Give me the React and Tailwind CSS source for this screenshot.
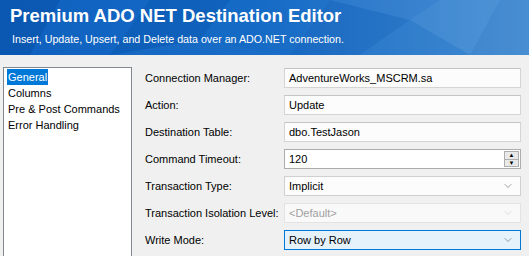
import { ChevronDown } from 'lucide-react'

const FONT = { fontFamily: '"Liberation Sans", Arial, sans-serif' }

function Header() {
  return (
    <div className="relative h-[55px] overflow-hidden bg-gradient-to-r from-[#0b5cb8] via-[#1469c4] to-[#4c92d3]">
      <svg className="absolute inset-0 h-full w-full" viewBox="0 0 529 55" preserveAspectRatio="none">
        <polygon points="0,0 60,0 30,55 0,55" fill="#0a4fa3" opacity="0.35" />
        <polygon points="60,0 150,0 110,55 30,55" fill="#1a6ccc" opacity="0.3" />
        <polygon points="150,0 230,0 200,40 110,55" fill="#0b55ad" opacity="0.3" />
        <polygon points="200,40 290,55 110,55" fill="#2a7bd1" opacity="0.25" />
        <polygon points="230,0 330,0 290,55 200,40" fill="#1c6fc9" opacity="0.3" />
        <polygon points="330,0 410,20 360,55 290,55" fill="#0f5fb9" opacity="0.3" />
        <polygon points="330,0 440,0 410,20" fill="#3a86d5" opacity="0.3" />
        <polygon points="410,20 470,55 360,55" fill="#2c7ccc" opacity="0.35" />
        <polygon points="440,0 500,0 470,55 410,20" fill="#5a9ee0" opacity="0.25" />
        <polygon points="500,0 529,0 529,55 470,55" fill="#3f86cc" opacity="0.3" />
      </svg>
      <div className="relative pl-[10px] pt-[4px] text-white">
        <div className="whitespace-nowrap text-[18.5px] font-bold leading-[24px]">Premium ADO NET Destination Editor</div>
        <div className="mt-[4px] whitespace-nowrap pl-[2px] text-[10.7px] leading-[14px]">
          Insert, Update, Upsert, and Delete data over an ADO.NET connection.
        </div>
      </div>
    </div>
  )
}

function TextBox({ value }) {
  return (
    <div className="flex h-[20px] w-[237px] items-center border border-[#d4d4d4] border-t-[#c4c4c4] bg-[#fcfcfc] pl-[4px] text-[11px] text-black">
      {value}
    </div>
  )
}

function Spinner({ value }) {
  return (
    <div className="flex h-[20px] w-[237px] items-center border border-[#adadad] bg-white pl-[4px] text-[11px] text-black">
      <span className="flex-1">{value}</span>
      <div className="mr-[1px] flex h-[16px] w-[15px] flex-col border border-[#adadad] bg-[#e9e9e9]">
        <div className="flex flex-1 items-center justify-center border-b border-[#adadad] text-[6px] leading-none">▲</div>
        <div className="flex flex-1 items-center justify-center text-[6px] leading-none">▼</div>
      </div>
    </div>
  )
}

function Combo({ value, disabled, focused }) {
  const box = focused
    ? 'border-[#0078d7] bg-[#e5f1fb] text-black'
    : disabled
    ? 'border-[#e3e3e3] bg-[#f9f9f9] text-[#a0a0a0]'
    : 'border-[#d0d0d0] bg-[#fcfcfc] text-black'
  return (
    <div className={`flex h-[20px] w-[237px] items-center border pl-[4px] text-[11px] ${box}`}>
      <span className="flex-1">{value}</span>
      <ChevronDown size={12} strokeWidth={1.2} className={`mr-[6px] ${disabled ? 'text-[#c8c8c8]' : 'text-[#606060]'}`} />
    </div>
  )
}

const ROWS = [
  ['Connection Manager:', <TextBox value="AdventureWorks_MSCRM.sa" />],
  ['Action:', <TextBox value="Update" />],
  ['Destination Table:', <TextBox value="dbo.TestJason" />],
  ['Command Timeout:', <Spinner value="120" />],
  ['Transaction Type:', <Combo value="Implicit" />],
  ['Transaction Isolation Level:', <Combo value="<Default>" disabled />],
  ['Write Mode:', <Combo value="Row by Row" focused />],
]

export default function App() {
  return (
    <div className="h-[256px] w-[529px] overflow-hidden bg-[#f0f0f0]" style={FONT}>
      <Header />
      <div className="flex">
        <div className="ml-[3px] mt-[12px] h-[200px] w-[129px] shrink-0 border border-[#828790] bg-white pl-[3px] pt-[1px] text-[11px] text-black">
          <div className="w-fit bg-[#0078d7] px-[1px] leading-[16px] text-white">General</div>
          <div className="whitespace-nowrap px-[1px] leading-[16px]">Columns</div>
          <div className="whitespace-nowrap px-[1px] leading-[16px]">Pre &amp; Post Commands</div>
          <div className="whitespace-nowrap px-[1px] leading-[16px]">Error Handling</div>
        </div>
        <div className="ml-[13px] mt-[13px] flex flex-col gap-[7px]">
          {ROWS.map(([label, field]) => (
            <div key={label} className="flex items-center">
              <div className="w-[139px] whitespace-nowrap text-[11px] text-black">{label}</div>
              {field}
            </div>
          ))}
        </div>
      </div>
    </div>
  )
}
